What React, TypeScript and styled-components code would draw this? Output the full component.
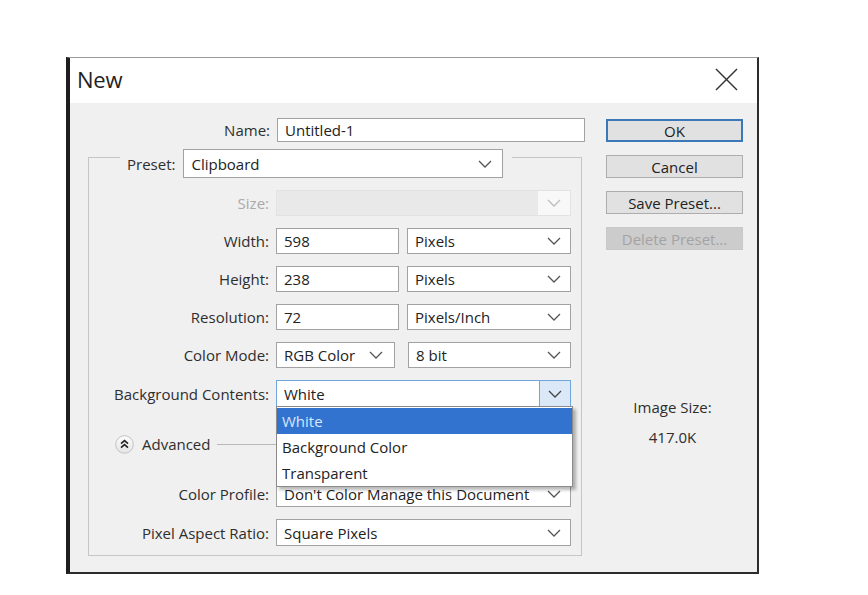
import React from "react";
import styled, { createGlobalStyle } from "styled-components";

const Global = createGlobalStyle`
  html, body { margin: 0; padding: 0; background: #ffffff; }
  body { font-family: "Open Sans", "Noto Sans", sans-serif; }
  * { box-sizing: border-box; }
`;

const Page = styled.div`
  width: 868px;
  height: 595px;
  padding: 57px 0 0 66px;
  background: #ffffff;
`;

const Dialog = styled.div`
  width: 693px;
  height: 517px;
  border-top: 1px solid #9a9a9a;
  border-left: 4px solid #1e1e1e;
  border-right: 2px solid #2c2c2c;
  border-bottom: 2px solid #2c2c2c;
  display: flex;
  flex-direction: column;
  background: #f0f0f0;
`;

const TitleBar = styled.div`
  height: 45px;
  background: #ffffff;
  display: flex;
  align-items: center;
  justify-content: space-between;
  padding: 0 19px 0 7px;
`;

const Title = styled.div`
  font-size: 22px;
  color: #222;
  letter-spacing: -0.2px;
  margin-top: -4px;
`;

const CloseBtn = styled.div`
  width: 23px;
  height: 23px;
  display: flex;
  margin-top: -2px;
`;

const Body = styled.div`
  flex: 1;
  display: flex;
`;

const LeftCol = styled.div`
  width: 520px;
  padding-top: 15px;
  display: flex;
  flex-direction: column;
`;

const RightCol = styled.div`
  width: 137px;
  margin-left: 16px;
  padding-top: 16px;
  display: flex;
  flex-direction: column;
`;

const NameRow = styled.div`
  display: flex;
  align-items: center;
  gap: 7px;
`;

const Label = styled.div<{ $w?: number; $disabled?: boolean }>`
  width: ${(p) => (p.$w ? `${p.$w}px` : "auto")};
  text-align: right;
  font-size: 15px;
  color: ${(p) => (p.$disabled ? "#a9a9a9" : "#2e2e2e")};
  white-space: nowrap;
`;

const TextBox = styled.div<{ $w: number; $h?: number }>`
  width: ${(p) => p.$w}px;
  height: ${(p) => p.$h ?? 25}px;
  background: #fff;
  border: 1px solid #a2a2a2;
  font-size: 15px;
  color: #222;
  display: flex;
  align-items: center;
  padding-left: 7px;
`;

const SelectBox = styled.div<{ $w: number; $h?: number; $focus?: boolean; $disabled?: boolean }>`
  position: relative;
  width: ${(p) => p.$w}px;
  height: ${(p) => p.$h ?? 26}px;
  background: ${(p) => (p.$disabled ? "#e9e9e9" : "#fff")};
  border: 1px solid ${(p) => (p.$focus ? "#6fa6dc" : p.$disabled ? "#e2e2e2" : "#a2a2a2")};
  font-size: 15px;
  color: #222;
  display: flex;
  align-items: center;
  padding-left: 7px;
`;

const SelectText = styled.span`
  flex: 1;
  white-space: nowrap;
  overflow: hidden;
`;

const Chevron = styled.div<{ $w?: number; $bg?: string; $active?: boolean }>`
  width: ${(p) => p.$w ?? 32}px;
  align-self: stretch;
  display: flex;
  align-items: center;
  justify-content: center;
  background: ${(p) => p.$bg ?? "transparent"};
  border-left: ${(p) => (p.$active ? "1px solid #6fa6dc" : "none")};
`;

const Group = styled.div`
  margin: 15px 0 0 18px;
  width: 494px;
  height: 399px;
  border: 1px solid #c6c6c6;
  display: flex;
  flex-direction: column;
`;

const GroupHeader = styled.div`
  align-self: flex-start;
  margin: -9px 0 0 31px;
  padding: 0 9px 0 7px;
  background: #f0f0f0;
  display: flex;
  align-items: center;
  gap: 8px;
`;

const Rows = styled.div`
  margin-top: 12px;
  display: flex;
  flex-direction: column;
  gap: 12px;
`;

const Row = styled.div`
  display: flex;
  align-items: center;
  gap: 7px;
`;

const Pair = styled.div<{ $gap: number }>`
  display: flex;
  gap: ${(p) => p.$gap}px;
`;

const AdvancedRow = styled.div`
  margin: 16px 0;
  height: 18px;
  display: flex;
  align-items: center;
  padding-left: 26px;
`;

const AdvancedText = styled.span`
  font-size: 15px;
  color: #2e2e2e;
  margin-left: 8px;
`;

const Rule = styled.div`
  flex: 1;
  height: 1px;
  background: #b9b9b9;
  margin: 1px 9px 0 7px;
`;

const List = styled.div`
  position: absolute;
  left: -1px;
  top: 100%;
  width: 297px;
  padding-top: 1px;
  border: 1px solid #8a8a8a;
  background: #fff;
  box-shadow: 3px 3px 3px rgba(0, 0, 0, 0.28);
  z-index: 2;
`;

const ListItem = styled.div<{ $sel?: boolean }>`
  height: 26px;
  display: flex;
  align-items: center;
  padding-left: 5px;
  font-size: 15px;
  background: ${(p) => (p.$sel ? "#3373d0" : "#fff")};
  color: ${(p) => (p.$sel ? "#d7e6fb" : "#222")};
`;

const Button = styled.div<{ $primary?: boolean; $disabled?: boolean }>`
  height: 23px;
  margin-bottom: 13px;
  display: flex;
  align-items: center;
  justify-content: center;
  font-size: 15px;
  background: ${(p) => (p.$disabled ? "#cccccc" : "#e1e1e1")};
  color: ${(p) => (p.$disabled ? "#a3a3a3" : "#222")};
  border: ${(p) =>
    p.$primary ? "2px solid #3a78b8" : p.$disabled ? "1px solid #c8c8c8" : "1px solid #adadad"};
`;

const InfoText = styled.div<{ $mt: number }>`
  margin-top: ${(p) => p.$mt}px;
  text-align: center;
  font-size: 15px;
  line-height: 20px;
  color: #2e2e2e;
  padding-right: 4px;
`;

const ChevronIcon: React.FC<{ color?: string }> = ({ color = "#555" }) => (
  <svg width="14" height="8" viewBox="0 0 14 8">
    <polyline points="1,1 7,7 13,1" fill="none" stroke={color} strokeWidth="1.3" />
  </svg>
);

const Select: React.FC<{
  w: number;
  h?: number;
  value?: string;
  chevW?: number;
  disabled?: boolean;
  children?: React.ReactNode;
}> = ({ w, h, value, chevW, disabled, children }) => (
  <SelectBox $w={w} $h={h} $disabled={disabled}>
    <SelectText>{value}</SelectText>
    <Chevron $w={chevW} $bg={disabled ? "#f8f8f8" : undefined}>
      <ChevronIcon color={disabled ? "#bdbdbd" : "#555"} />
    </Chevron>
    {children}
  </SelectBox>
);

const AdvancedIcon = () => (
  <svg width="19" height="19" viewBox="0 0 19 19">
    <defs>
      <linearGradient id="adv" x1="0" y1="0" x2="0" y2="1">
        <stop offset="0" stopColor="#fdfdfd" />
        <stop offset="1" stopColor="#e4e4e4" />
      </linearGradient>
    </defs>
    <circle cx="9.5" cy="9.5" r="8.8" fill="url(#adv)" stroke="#c2c2c2" strokeWidth="1" />
    <polyline points="6,8.6 9.5,5.6 13,8.6" fill="none" stroke="#222" strokeWidth="1.6" />
    <polyline points="6,12.6 9.5,9.6 13,12.6" fill="none" stroke="#222" strokeWidth="1.6" />
  </svg>
);

export default function App() {
  return (
    <>
      <Global />
      <Page>
        <Dialog>
          <TitleBar>
            <Title>New</Title>
            <CloseBtn>
              <svg width="23" height="23" viewBox="0 0 23 23">
                <line x1="1" y1="1" x2="22" y2="22" stroke="#333" strokeWidth="1.4" />
                <line x1="22" y1="1" x2="1" y2="22" stroke="#333" strokeWidth="1.4" />
              </svg>
            </CloseBtn>
          </TitleBar>
          <Body>
            <LeftCol>
              <NameRow>
                <Label $w={200}>Name:</Label>
                <TextBox $w={308} $h={24}>Untitled-1</TextBox>
              </NameRow>
              <Group>
                <GroupHeader>
                  <Label>Preset:</Label>
                  <Select w={320} h={29} value="Clipboard" chevW={34} />
                </GroupHeader>
                <Rows>
                  <Row>
                    <Label $w={180} $disabled>Size:</Label>
                    <Select w={295} h={26} disabled />
                  </Row>
                  <Row>
                    <Label $w={180}>Width:</Label>
                    <Pair $gap={8}>
                      <TextBox $w={123} $h={26}>598</TextBox>
                      <Select w={164} value="Pixels" />
                    </Pair>
                  </Row>
                  <Row>
                    <Label $w={180}>Height:</Label>
                    <Pair $gap={8}>
                      <TextBox $w={123} $h={26}>238</TextBox>
                      <Select w={164} value="Pixels" />
                    </Pair>
                  </Row>
                  <Row>
                    <Label $w={180}>Resolution:</Label>
                    <Pair $gap={8}>
                      <TextBox $w={123} $h={26}>72</TextBox>
                      <Select w={164} value="Pixels/Inch" />
                    </Pair>
                  </Row>
                  <Row>
                    <Label $w={180}>Color Mode:</Label>
                    <Pair $gap={13}>
                      <Select w={119} value="RGB Color" chevW={36} />
                      <Select w={163} value="8 bit" />
                    </Pair>
                  </Row>
                  <Row>
                    <Label $w={180}>Background Contents:</Label>
                    <SelectBox $w={295} $h={27} $focus>
                      <SelectText>White</SelectText>
                      <Chevron $w={31} $bg="#dae8f7" $active>
                        <ChevronIcon color="#444" />
                      </Chevron>
                      <List>
                        <ListItem $sel>White</ListItem>
                        <ListItem>Background Color</ListItem>
                        <ListItem>Transparent</ListItem>
                      </List>
                    </SelectBox>
                  </Row>
                  <AdvancedRow>
                    <AdvancedIcon />
                    <AdvancedText>Advanced</AdvancedText>
                    <Rule />
                  </AdvancedRow>
                  <Row>
                    <Label $w={180}>Color Profile:</Label>
                    <Select w={295} value="Don't Color Manage this Document" />
                  </Row>
                  <Row>
                    <Label $w={180}>Pixel Aspect Ratio:</Label>
                    <Select w={295} h={27} value="Square Pixels" />
                  </Row>
                </Rows>
              </Group>
            </LeftCol>
            <RightCol>
              <Button $primary>OK</Button>
              <Button>Cancel</Button>
              <Button>Save Preset...</Button>
              <Button $disabled>Delete Preset...</Button>
              <InfoText $mt={134}>Image Size:</InfoText>
              <InfoText $mt={10}>417.0K</InfoText>
            </RightCol>
          </Body>
        </Dialog>
      </Page>
    </>
  );
}
